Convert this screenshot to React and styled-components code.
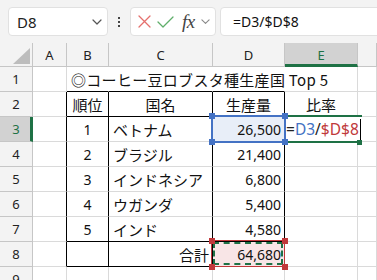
import React from 'react';
import styled, { createGlobalStyle } from 'styled-components';

const GRID = '#dadada';
const HEAD_LINE = '#c6c6c6';
const HEAD_BG = '#f3f3f3';
const GREEN = '#1e7145';
const BLUE = '#4472c4';
const RED = '#c0393b';

const GlobalStyle = createGlobalStyle`
  html, body { margin: 0; padding: 0; background: #fff; overflow: hidden; }
  body { font-family: "Noto Sans CJK JP", "Noto Sans", sans-serif; }
`;

const Sheet = styled.div`
  width: 377px;
  height: 280px;
  overflow: hidden;
  background: #fff;
  display: flex;
  flex-direction: column;
`;

const Toolbar = styled.div`
  height: 43px;
  flex: none;
  box-sizing: border-box;
  padding: 7px 0 7px 8px;
  background: ${HEAD_BG};
  display: flex;
  align-items: stretch;
`;

const Box = styled.div`
  box-sizing: border-box;
  background: #fff;
  border: 1px solid #e1e1e1;
  border-radius: 4px;
  display: flex;
  align-items: center;
`;

const NameBox = styled(Box)`
  width: 100px;
  padding: 0 5px 0 8px;
  justify-content: space-between;
  font-family: "Noto Sans", sans-serif;
  font-size: 15px;
  color: #222;
`;

const Kebab = styled.div`
  width: 22px;
  display: flex;
  flex-direction: column;
  align-items: center;
  justify-content: center;
  gap: 2px;
  & > i { display: block; width: 2px; height: 2px; background: #444; }
`;

const FxGroup = styled(Box)`
  width: 86px;
  padding: 0 0 0 7px;
  gap: 6px;
`;

const Fx = styled.span`
  font-family: "Liberation Serif", serif;
  font-style: italic;
  font-size: 19px;
  line-height: 1;
  color: #444;
  margin-left: 2px;
  letter-spacing: -0.5px;
`;

const FormulaInput = styled(Box)`
  flex: 1;
  margin-left: 4px;
  margin-right: -10px;
  padding-left: 12px;
  font-family: "Noto Sans", sans-serif;
  font-size: 14px;
  color: #111;
`;

const Grid = styled.div`
  display: grid;
  grid-template-columns: 33px 34px 42px 104px 72px 73px 1fr;
  grid-template-rows: 24px repeat(9, 25px);
  flex: none;
`;

const Corner = styled.div`
  box-sizing: border-box;
  background: ${HEAD_BG};
  border-right: 1px solid ${HEAD_LINE};
  border-bottom: 1px solid ${HEAD_LINE};
  display: flex;
  align-items: flex-end;
  justify-content: flex-end;
  padding: 0 2px 2px 0;
`;

const ColHead = styled.div`
  box-sizing: border-box;
  background: ${p => (p.$active ? '#d2d2d2' : HEAD_BG)};
  color: ${p => (p.$active ? GREEN : '#222')};
  border-right: 1px solid ${HEAD_LINE};
  border-bottom: ${p => (p.$active ? `3px solid ${GREEN}` : `1px solid ${HEAD_LINE}`)};
  display: flex;
  align-items: center;
  justify-content: center;
  padding-top: ${p => (p.$active ? '2px' : '0')};
  font-family: "Noto Sans", sans-serif;
  font-size: 13px;
`;

const RowHead = styled.div`
  box-sizing: border-box;
  background: ${p => (p.$active ? '#d2d2d2' : HEAD_BG)};
  color: ${p => (p.$active ? GREEN : '#222')};
  border-right: ${p => (p.$active ? `3px solid ${GREEN}` : `1px solid ${HEAD_LINE}`)};
  border-bottom: 1px solid ${HEAD_LINE};
  display: flex;
  align-items: center;
  justify-content: center;
  padding-left: ${p => (p.$active ? '2px' : '0')};
  font-family: "Noto Sans", sans-serif;
  font-size: 13px;
`;

const edge = v => (v === 'dark' ? '#000' : v === 'none' ? 'transparent' : GRID);

const Cell = styled.div`
  position: relative;
  box-sizing: border-box;
  border-right: 1px solid ${p => edge(p.$r)};
  border-bottom: 1px solid ${p => edge(p.$b)};
  background: ${p => p.$bg || 'transparent'};
  display: flex;
  align-items: center;
  justify-content: ${p => (p.$align === 'center' ? 'center' : p.$align === 'right' ? 'flex-end' : 'flex-start')};
  padding: 0 ${p => (p.$align === 'right' ? '3px' : '4px')} 0 4px;
  font-size: 15px;
  color: #111;
  white-space: nowrap;
  overflow: visible;
  letter-spacing: ${p => p.$spacing || 'normal'};
  z-index: ${p => p.$z || 'auto'};
`;

const Num = styled.span`
  font-family: "Noto Sans", sans-serif;
  font-size: 14px;
`;

const Selection = styled.div`
  position: absolute;
  left: -2px;
  top: -2px;
  right: -2px;
  bottom: -2px;
  border: 2px solid ${BLUE};
  pointer-events: none;
`;

const Handle = styled.span`
  position: absolute;
  width: 6px;
  height: 6px;
  background: ${p => p.$color};
  ${p => (p.$v === 'top' ? 'top: -4px;' : 'bottom: -4px;')}
  ${p => (p.$h === 'left' ? 'left: -4px;' : 'right: -4px;')}
`;

const Ants = styled.div`
  position: absolute;
  left: -2px;
  top: -2px;
  right: -1px;
  bottom: -1px;
  border: 1px solid ${RED};
  pointer-events: none;
  &::after {
    content: '';
    position: absolute;
    inset: 1px;
    border: 2px dashed ${GREEN};
  }
`;

const Editor = styled.div`
  position: absolute;
  left: -1px;
  top: -2px;
  right: -5px;
  bottom: -2px;
  box-sizing: border-box;
  border-top: 2px solid ${GREEN};
  border-bottom: 2px solid ${GREEN};
  background: #fff;
  display: flex;
  align-items: center;
  padding-left: 2px;
  font-family: "Noto Sans", sans-serif;
  font-size: 15.5px;
  color: #222;
  &::after {
    content: '';
    width: 1px;
    height: 21px;
    background: #000;
    margin-left: 1px;
  }
`;

const EditHandle = styled.span`
  position: absolute;
  right: 0;
  bottom: -4px;
  width: 5px;
  height: 5px;
  background: ${GREEN};
`;

const Ref = styled.span`
  color: ${p => p.$color};
`;

const Chevron = ({ size = 10, color = '#555' }) => (
  <svg width={size} height={size * 0.6} viewBox="0 0 10 6" fill="none">
    <path d="M1 1l4 4 4-4" stroke={color} strokeWidth="1.2" strokeLinecap="round" strokeLinejoin="round" />
  </svg>
);

const CancelIcon = () => (
  <svg width="13" height="13" viewBox="0 0 13 13" fill="none">
    <path d="M1 1l11 11M12 1L1 12" stroke="#e5706d" strokeWidth="1.3" strokeLinecap="round" />
  </svg>
);

const EnterIcon = () => (
  <svg width="17" height="12" viewBox="0 0 17 12" fill="none">
    <path d="M1 6l5 5L16 1" stroke="#5fae6a" strokeWidth="1.3" strokeLinecap="round" strokeLinejoin="round" />
  </svg>
);

const CornerTriangle = () => (
  <svg width="17" height="16" viewBox="0 0 17 16">
    <path d="M17 0V16H0Z" fill="#bdbdbd" />
  </svg>
);

const COLS = ['A', 'B', 'C', 'D', 'E', ''];

const rows = [
  { n: 1, cells: [{}, { text: '◎コーヒー豆ロブスタ種生産国 Top 5', r: 'none', b: 'dark', z: 2, spacing: '0.3px' }, { r: 'none', b: 'dark' }, { r: 'none', b: 'dark' }, {}, {}] },
  { n: 2, cells: [{ r: 'dark' }, { text: '順位', align: 'center', r: 'dark', b: 'dark' }, { text: '国名', align: 'center', r: 'dark', b: 'dark' }, { text: '生産量', align: 'center', r: 'dark', b: 'dark' }, { text: '比率', align: 'center' }, {}] },
  { n: 3, rank: '1', name: 'ベトナム', value: '26,500', kind: 'selected' },
  { n: 4, rank: '2', name: 'ブラジル', value: '21,400' },
  { n: 5, rank: '3', name: 'インドネシア', value: '6,800' },
  { n: 6, rank: '4', name: 'ウガンダ', value: '5,400' },
  { n: 7, rank: '5', name: 'インド', value: '4,580', last: true },
  { n: 8, total: '64,680' },
  { n: 9, cells: [{}, {}, {}, {}, {}, {}] },
];

function DataRow({ row }) {
  if (row.cells) {
    return row.cells.map((c, i) => (
      <Cell key={i} $r={c.r} $b={c.b} $align={c.align} $z={c.z} $spacing={c.spacing}>
        {c.text}
      </Cell>
    ));
  }
  if (row.total) {
    return (
      <>
        <Cell $r="dark" />
        <Cell $r="dark" $b="dark" />
        <Cell $r="dark" $b="dark" $align="right">合計</Cell>
        <Cell $r="dark" $b="dark" $align="right" $bg="#f8e5e6" $z={3}>
          <Num>{row.total}</Num>
          <Ants />
          <Handle $color={RED} $v="top" $h="left" />
          <Handle $color={RED} $v="top" $h="right" />
          <Handle $color={RED} $v="bottom" $h="left" />
          <Handle $color={RED} $v="bottom" $h="right" />
        </Cell>
        <Cell />
        <Cell />
      </>
    );
  }
  const b = row.last ? 'dark' : undefined;
  const selected = row.kind === 'selected';
  return (
    <>
      <Cell $r="dark" />
      <Cell $r="dark" $b={b} $align="center"><Num>{row.rank}</Num></Cell>
      <Cell $r="dark" $b={b}>{row.name}</Cell>
      <Cell $r="dark" $b={b} $align="right" $bg={selected ? '#e8eef8' : undefined} $z={selected ? 3 : undefined}>
        <Num>{row.value}</Num>
        {selected && (
          <>
            <Selection />
            <Handle $color={BLUE} $v="top" $h="left" />
            <Handle $color={BLUE} $v="top" $h="right" />
            <Handle $color={BLUE} $v="bottom" $h="left" />
            <Handle $color={BLUE} $v="bottom" $h="right" />
          </>
        )}
      </Cell>
      <Cell $z={selected ? 2 : undefined}>
        {selected && (
          <Editor>
            =<Ref $color={BLUE}>D3</Ref>/<Ref $color={RED}>$D$8</Ref>
            <EditHandle />
          </Editor>
        )}
      </Cell>
      <Cell />
    </>
  );
}

export default function App() {
  return (
    <>
      <GlobalStyle />
      <Sheet>
        <Toolbar>
          <NameBox>
            <span>D8</span>
            <Chevron />
          </NameBox>
          <Kebab><i /><i /><i /></Kebab>
          <FxGroup>
            <CancelIcon />
            <EnterIcon />
            <Fx>fx</Fx>
            <Chevron size={9} color="#888" />
          </FxGroup>
          <FormulaInput>=D3/$D$8</FormulaInput>
        </Toolbar>
        <Grid>
          <Corner><CornerTriangle /></Corner>
          {COLS.map((c, i) => (
            <ColHead key={i} $active={c === 'E'}>{c}</ColHead>
          ))}
          {rows.map(row => (
            <React.Fragment key={row.n}>
              <RowHead $active={row.n === 3}>{row.n}</RowHead>
              <DataRow row={row} />
            </React.Fragment>
          ))}
        </Grid>
      </Sheet>
    </>
  );
}
